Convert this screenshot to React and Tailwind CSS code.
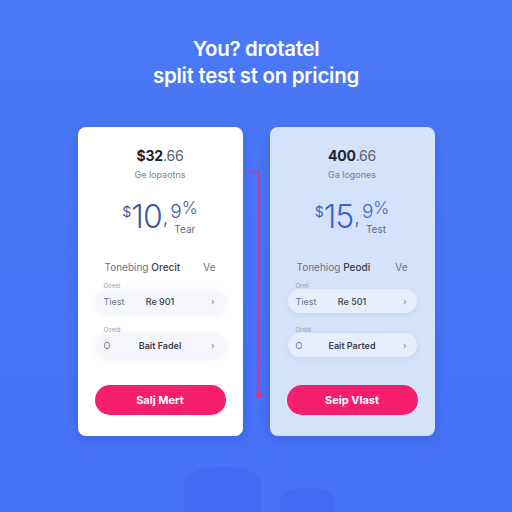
import React from "react";

const plans = [
  {
    price: "$32",
    cents: ".66",
    note: "Ge lopaotns",
    whole: "10",
    tag: "Tear",
    rowA: "Tonebing",
    rowB: "Orecit",
    labelA: "Ooeel",
    leftA: "Tiest",
    midA: "Re 901",
    labelB: "Ooeld",
    leftB: "O",
    midB: "Bait Fadel",
    cta: "Salj Mert",
    card: "bg-white",
    pill: "bg-[#f4f6fc]",
    big: "text-[#3c5c9e]",
  },
  {
    price: "400",
    cents: ".66",
    note: "Ga logones",
    whole: "15",
    tag: "Test",
    rowA: "Tonehiog",
    rowB: "Peodi",
    labelA: "Oreil",
    leftA: "Tiest",
    midA: "Re 501",
    labelB: "Oreld",
    leftB: "O",
    midB: "Eait Parted",
    cta: "Seip Vlast",
    card: "bg-[#d5e2fb]",
    pill: "bg-[#e6eefc]",
    big: "text-[#3a63d2]",
  },
];

function Pill({ label, left, mid, tone, midBold }) {
  return (
    <div className="w-full flex flex-col">
      <div className="h-[6px] pl-[8px] text-[6px] leading-[6px] text-[#9aa0ad]">{label}</div>
      <div
        className={`h-[24px] w-full rounded-full ${tone} shadow-[0_2px_6px_rgba(60,80,140,0.10)] grid grid-cols-[1fr_auto_1fr] items-center px-[8px] text-[9px] leading-none`}
      >
        <span className="text-[#6d7282]">{left}</span>
        <span className={`text-[#3a3f4d] ${midBold ? "font-semibold" : "font-medium"}`}>{mid}</span>
        <span className="justify-self-end pr-[2px] text-[#7d8292]">›</span>
      </div>
    </div>
  );
}

function PlanCard({ p }) {
  return (
    <div
      className={`w-[165px] h-[309px] rounded-[8px] ${p.card} shadow-[0_4px_14px_rgba(30,50,140,0.18)] flex flex-col items-center pt-[19px] px-[18px]`}
    >
      <div className="text-[14px] leading-[20px] font-bold text-[#1e2230] tracking-[-0.2px]">
        {p.price}
        <span className="font-normal text-[#5a5f6c]">{p.cents}</span>
      </div>
      <div className="mt-[3px] text-[9px] leading-[12px] text-[#7a7f8c]">{p.note}</div>

      <div className={`mt-[19px] h-[34px] flex items-start ${p.big}`}>
        <span className="text-[14px] leading-[18px] mt-[3px]">$</span>
        <span className="text-[32px] leading-[34px] font-light tracking-[-1px]">{p.whole}</span>
        <span className="text-[20px] leading-[34px] font-light ml-[1px]">,</span>
        <span className="ml-[2px] flex flex-col items-start">
          <span className="flex items-start">
            <span className="text-[19px] leading-[19px] font-light mt-[2px]">9</span>
            <span className="text-[17px] leading-[16px] font-light">%</span>
          </span>
          <span className="ml-[4px] mt-[3px] text-[10px] leading-[10px] text-[#5f6b85]">{p.tag}</span>
        </span>
      </div>

      <div className="mt-[26px] w-full px-[9px] flex justify-between text-[10px] leading-[14px]">
        <span className="text-[#6d7282]">
          {p.rowA} <span className="text-[#3a3f4d] font-medium">{p.rowB}</span>
        </span>
        <span className="text-[#6d7282]">Ve</span>
      </div>

      <div className="mt-[9px] w-full">
        <Pill label={p.labelA} left={p.leftA} mid={p.midA} tone={p.pill} />
      </div>
      <div className="mt-[14px] w-full">
        <Pill label={p.labelB} left={p.leftB} mid={p.midB} tone={p.pill} midBold />
      </div>

      <button className="mt-[28px] h-[30px] w-[131px] rounded-full bg-[#f61f6e] text-white text-[11px] font-bold">
        {p.cta}
      </button>
    </div>
  );
}

function Connector() {
  return (
    <svg width="27" height="309" viewBox="0 0 27 309" className="shrink-0">
      <path
        d="M4 44 L16 45 L15 266"
        fill="none"
        stroke="#ec2a84"
        strokeWidth="1.6"
        strokeLinejoin="round"
      />
      <path d="M13 265 L21 268 L14 272 Z" fill="#ec2a84" />
    </svg>
  );
}

export default function App() {
  return (
    <div className="h-[512px] w-[512px] overflow-hidden bg-gradient-to-b from-[#4b79f6] via-[#4773f5] to-[#4670f6] flex flex-col items-center font-['Inter',sans-serif]">
      <h1 className="pt-[35px] text-white text-[20.5px] leading-[27px] font-semibold text-center tracking-[-0.3px]">
        You? drotatel
        <br />
        split test st on pricing
      </h1>

      <div className="mt-[38px] flex">
        <PlanCard p={plans[0]} />
        <Connector />
        <PlanCard p={plans[1]} />
      </div>

      <div className="mt-[31px] flex items-end gap-[19px] ml-[5px]">
        <div className="w-[77px] h-[45px] rounded-t-[34px_16px] bg-[#4169f2]" />
        <div className="w-[54px] h-[24px] rounded-t-[24px_12px] bg-[#4169f2]" />
      </div>
    </div>
  );
}
